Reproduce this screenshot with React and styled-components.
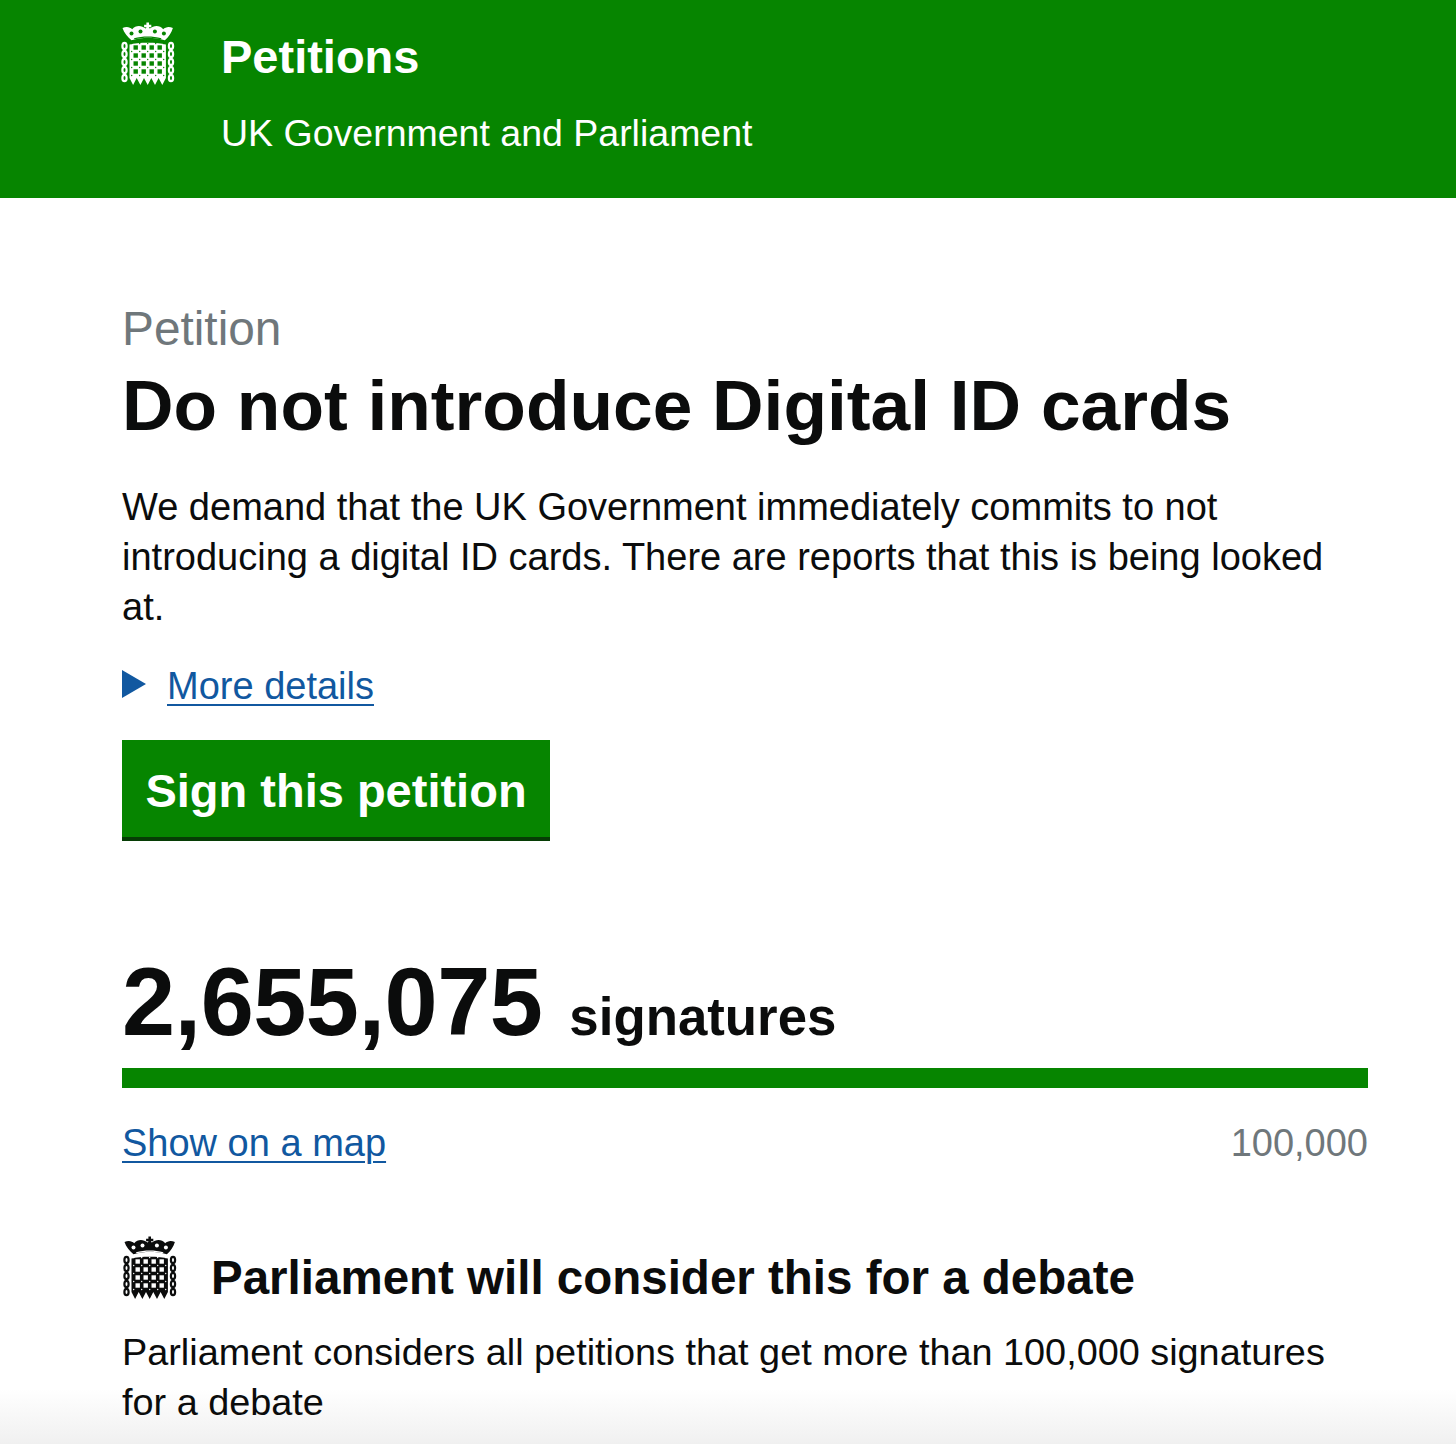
import styled, { createGlobalStyle } from "styled-components";

const GlobalStyle = createGlobalStyle`
    html, body {
        margin: 0;
        padding: 0;
        background: #fff;
    }

    body {
        font-family: "Liberation Sans", Arial, sans-serif;
        color: #0b0c0c;
    }
`;

const Page = styled.div`
    position: relative;
    height: 1444px;
    overflow: hidden;
`;

const Header = styled.header`
    display: flex;
    align-items: flex-start;
    gap: 46px;
    height: 198px;
    box-sizing: border-box;
    padding: 22px 0 0 121px;
    background: #068500;
    color: #fff;
`;

const HeaderText = styled.div`
    display: flex;
    flex-direction: column;
`;

const HeaderTitle = styled.div`
    font-size: 47px;
    font-weight: 700;
    line-height: 70px;
`;

const HeaderSub = styled.div`
    font-size: 37.5px;
    line-height: 50px;
    margin-top: 16px;
`;

const Main = styled.main`
    position: relative;
    z-index: 1;
    padding: 102px 88px 0 122px;
`;

const Kicker = styled.div`
    font-size: 47.8px;
    line-height: 58px;
    color: #6f777b;
`;

const Title = styled.h1`
    margin: 5px 0 0;
    font-size: 71.3px;
    line-height: 84px;
    font-weight: 700;
`;

const Body = styled.p`
    margin: ${({ $top }) => $top || 0}px 0 0;
    font-size: ${({ $size }) => $size || 38}px;
    line-height: 50px;
`;

const Details = styled.div`
    display: flex;
    align-items: center;
    gap: 21px;
    margin-top: 29px;
    height: 50px;
`;

const Arrow = styled.span`
    width: 0;
    height: 0;
    border-style: solid;
    border-width: 14px 0 14px 24px;
    border-color: transparent transparent transparent #1158a0;
    margin-bottom: 4px;
`;

const TextLink = styled.a`
    font-size: 38px;
    line-height: 50px;
    color: #1158a0;
    text-decoration: underline;
    text-decoration-thickness: 2px;
    text-underline-offset: 5px;
`;

const SignButton = styled.button`
    display: block;
    width: 428px;
    height: 101px;
    margin-top: 29px;
    padding: 4px 0 0;
    border: none;
    border-bottom: 4px solid #063d05;
    box-sizing: border-box;
    background: #068500;
    color: #fff;
    font-family: inherit;
    font-size: 47px;
    font-weight: 700;
    text-align: center;
`;

const Count = styled.div`
    display: flex;
    align-items: baseline;
    gap: 27px;
    margin-top: 111px;
    line-height: 100px;
`;

const CountNumber = styled.span`
    font-size: 95.5px;
    font-weight: 700;
    letter-spacing: -0.5px;
`;

const CountLabel = styled.span`
    font-size: 52.8px;
    font-weight: 700;
`;

const ProgressBar = styled.div`
    height: 20px;
    margin-top: 1px;
    background: #068500;
`;

const ProgressFooter = styled.div`
    display: flex;
    justify-content: space-between;
    margin-top: 30px;
`;

const Target = styled.span`
    font-size: 38px;
    line-height: 50px;
    color: #6f777b;
`;

const DebateHeading = styled.div`
    display: flex;
    align-items: flex-start;
    gap: 34px;
    margin-top: 68px;
    padding-left: 1px;
`;

const DebateTitle = styled.h2`
    margin: 10px 0 0;
    font-size: 47.5px;
    line-height: 64px;
    font-weight: 700;
`;

const BottomFade = styled.div`
    position: absolute;
    left: 0;
    right: 0;
    bottom: 0;
    height: 55px;
    background: linear-gradient(to bottom, rgba(240, 240, 240, 0), rgba(240, 240, 240, 1));
    pointer-events: none;
`;

const LogoSvg = styled.svg`
    flex: none;
    width: 54px;
    height: 64px;
`;

const chainLinks = [44, 52, 60, 68, 76];
const holeCols = [14.7, 22.7, 30.7, 38.7];
const holeRows = [45.5, 53.5, 61.5, 69.5];
const rivetCols = [10.7, 18.7, 26.7, 34.7, 42.7];
const rivetRows = [41.5, 49.5, 57.5, 65.5, 73.5];
const crownHoles = [
    [10.5, 31.5],
    [19.5, 29.5],
    [33.9, 29.5],
    [42.9, 31.5],
];

// crowned portcullis, the holes are painted in the colour behind it
const Portcullis = ({ color, hole }) => (
    <LogoSvg viewBox="0 20 54 64" aria-hidden="true">
        <path d="M25.400 20.500h2.600v2.300h2.300v2.500H28V28h-2.600v-2.700h-2.300v-2.500h2.300z" fill={color} />
        <path d="M1.500 26C5.500 24 9 25 11.200 27.200 14.500 23 20.500 23 24.500 26.500L26.700 25l2.200 1.500c4-3.500 10-3.500 13.300.7 2.200-2.200 5.700-3.200 9.700-1.200-1.400 5-4.400 9-8 12.300-10.500-3.500-22.900-3.500-33.400 0C6.900 35 2.900 31 1.500 26z" fill={color} />
        <g fill={hole}>
            {crownHoles.map(([x, y]) => (
                <circle key={x} cx={x} cy={y} r="2" />
            ))}
            <path d="M13 36.300c9-2.400 18.400-2.400 27.400 0l-.4 1c-9-2.200-17.600-2.200-26.600 0z" />
        </g>
        <path d="M8.500 42.500c8-2.500 28.400-2.500 36.400 0V76l-3.600 7-3.700-7-3.600 7-3.700-7-3.600 7-3.700-7-3.600 7-3.700-7-3.600 7-3.600-7z" fill={color} />
        <g fill={hole}>
            {holeRows.map((y) =>
                holeCols.map((x) => (
                    <rect key={`${x}-${y}`} x={x - 2.200} y={y - 2.200} width="4.400" height="4.400" />
                ))
            )}
            {rivetRows.map((y) =>
                rivetCols.map((x) => (
                    <circle key={`${x}-${y}`} cx={x} cy={y} r="0.700" />
                ))
            )}
        </g>
        <g fill="none" stroke={color} strokeWidth="2.200">
            {chainLinks.map((y) => (
                <g key={y}>
                    <ellipse cx="3.500" cy={y} rx="2.100" ry="3.200" />
                    <ellipse cx="50" cy={y} rx="2.100" ry="3.200" />
                </g>
            ))}
        </g>
    </LogoSvg>
);

const App = () => {
    return (
        <Page>
            <GlobalStyle />
            <Header>
                <Portcullis color="#fff" hole="#068500" />
                <HeaderText>
                    <HeaderTitle>Petitions</HeaderTitle>
                    <HeaderSub>UK Government and Parliament</HeaderSub>
                </HeaderText>
            </Header>
            <Main>
                <Kicker>Petition</Kicker>
                <Title>Do not introduce Digital ID cards</Title>
                <Body $top={35}>
                    We demand that the UK Government immediately commits to not introducing a digital ID cards. There are reports that this is being looked at.
                </Body>
                <Details>
                    <Arrow />
                    <TextLink href="#">More details</TextLink>
                </Details>
                <SignButton>Sign this petition</SignButton>
                <Count>
                    <CountNumber>2,655,075</CountNumber>
                    <CountLabel>signatures</CountLabel>
                </Count>
                <ProgressBar />
                <ProgressFooter>
                    <TextLink href="#">Show on a map</TextLink>
                    <Target>100,000</Target>
                </ProgressFooter>
                <DebateHeading>
                    <Portcullis color="#0b0c0c" hole="#fff" />
                    <DebateTitle>Parliament will consider this for a debate</DebateTitle>
                </DebateHeading>
                <Body $top={17} $size={37.85}>
                    Parliament considers all petitions that get more than 100,000 signatures for a debate
                </Body>
            </Main>
            <BottomFade />
        </Page>
    );
};

export default App;
